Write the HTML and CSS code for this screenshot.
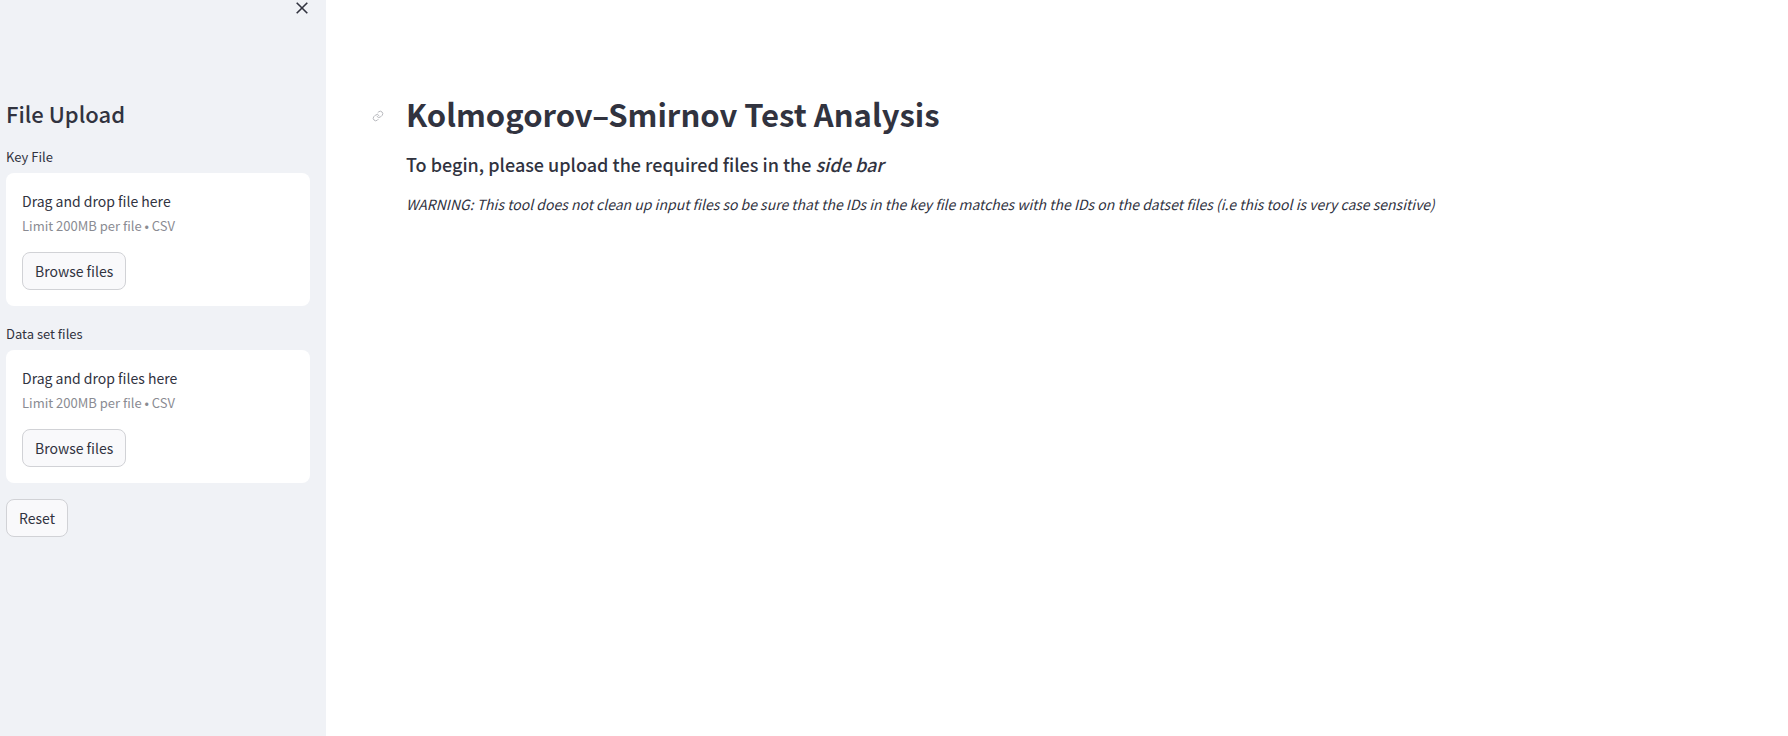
FILE: index.html
```html
<!DOCTYPE html>
<html lang="en">
<head>
<meta charset="utf-8">
<meta name="viewport" content="width=device-width, initial-scale=1">
<title>Kolmogorov–Smirnov Test Analysis</title>
<link rel="stylesheet" href="styles.css">
</head>
<body>
<div class="app">
  <aside class="sidebar">
    <div class="sidebar-top">
      <button class="close" type="button" aria-label="Close sidebar">
        <svg width="12" height="12" viewBox="0 0 12 12" fill="none" stroke="currentColor" stroke-width="1.6"><path d="M.7.7l10.600 10.600M11.300.7L.7 11.300"/></svg>
      </button>
    </div>
    <h2 class="sidebar-title">File Upload</h2>
    <section class="uploader">
      <label class="label" for="key-file">Key File</label>
      <div class="dropzone">
        <span class="drop-text">Drag and drop file here</span>
        <small class="drop-limit">Limit 200MB per file • CSV</small>
        <button class="btn" id="key-file" type="button">Browse files</button>
      </div>
    </section>
    <section class="uploader">
      <label class="label" for="data-files">Data set files</label>
      <div class="dropzone">
        <span class="drop-text">Drag and drop files here</span>
        <small class="drop-limit">Limit 200MB per file • CSV</small>
        <button class="btn" id="data-files" type="button">Browse files</button>
      </div>
    </section>
    <button class="btn" type="button">Reset</button>
  </aside>
  <main class="main">
    <div class="heading">
      <a class="anchor" href="#title" aria-label="Link to heading">
        <svg width="12" height="12" viewBox="0 0 24 24" fill="none" stroke="currentColor" stroke-width="2" stroke-linecap="round" stroke-linejoin="round"><path d="M10 13a5 5 0 0 0 7.500.500l3-3a5 5 0 0 0-7-7l-1.700 1.700"/><path d="M14 11a5 5 0 0 0-7.500-.500l-3 3a5 5 0 0 0 7 7l1.700-1.700"/></svg>
      </a>
      <h1 class="title" id="title">Kolmogorov–Smirnov Test Analysis</h1>
    </div>
    <h3 class="subtitle">To begin, please upload the required files in the <em>side bar</em></h3>
    <p class="warning"><em>WARNING: This tool does not clean up input files so be sure that the IDs in the key file matches with the IDs on the datset files (i.e this tool is very case sensitive)</em></p>
  </main>
</div>
</body>
</html>
```
FILE: styles.css
```css
* {
  box-sizing: border-box;
}

body {
  margin: 0;
  background: #ffffff;
  color: #31333f;
  font-family: "Noto Sans CJK JP", "Noto Sans", sans-serif;
  font-size: 14px;
  line-height: 24px;
}

.app {
  display: flex;
  min-height: 100vh;
}

.sidebar {
  display: flex;
  flex-direction: column;
  align-items: flex-start;
  flex: 0 0 326px;
  padding: 0 16px 16px 6px;
  background: #f0f2f6;
}

.sidebar-top {
  display: flex;
  justify-content: flex-end;
  align-self: stretch;
  height: 98px;
}

.close {
  display: flex;
  width: 16px;
  height: 16px;
  padding: 2px;
  border: 0;
  background: none;
  color: #31333f;
}

.sidebar-title {
  margin: 0 0 18px;
  font-size: 22px;
  font-weight: 500;
  line-height: 31px;
}

.uploader {
  align-self: stretch;
  margin-bottom: 16px;
}

.uploader + .uploader {
  margin-top: 2px;
}

.label {
  display: block;
  margin-bottom: 6px;
  font-size: 13px;
  line-height: 20px;
}

.dropzone {
  display: flex;
  flex-direction: column;
  align-items: flex-start;
  padding: 16px;
  border-radius: 8px;
  background: #ffffff;
}

.drop-limit {
  margin: 3px 0 16px;
  color: #8a8b92;
  font-size: 13px;
  line-height: 20px;
}

.btn {
  height: 38px;
  padding: 0 12px;
  border: 1px solid #d1d2d6;
  border-radius: 8px;
  background: #f9f9fb;
  color: inherit;
  font: inherit;
}

.main {
  flex: 1;
  min-width: 0;
  padding: 88px 80px 32px;
}

.heading {
  display: flex;
  align-items: center;
  gap: 22px;
  margin-left: -34px;
}

.anchor {
  display: flex;
  padding-top: 4px;
  color: #b8b9be;
}

.title {
  margin: 0;
  font-size: 31px;
  font-weight: 700;
  line-height: 52px;
}

.subtitle {
  margin: 12px 0 16px;
  font-size: 18px;
  font-weight: 500;
  line-height: 24px;
}

.warning {
  margin: 0;
}
```
